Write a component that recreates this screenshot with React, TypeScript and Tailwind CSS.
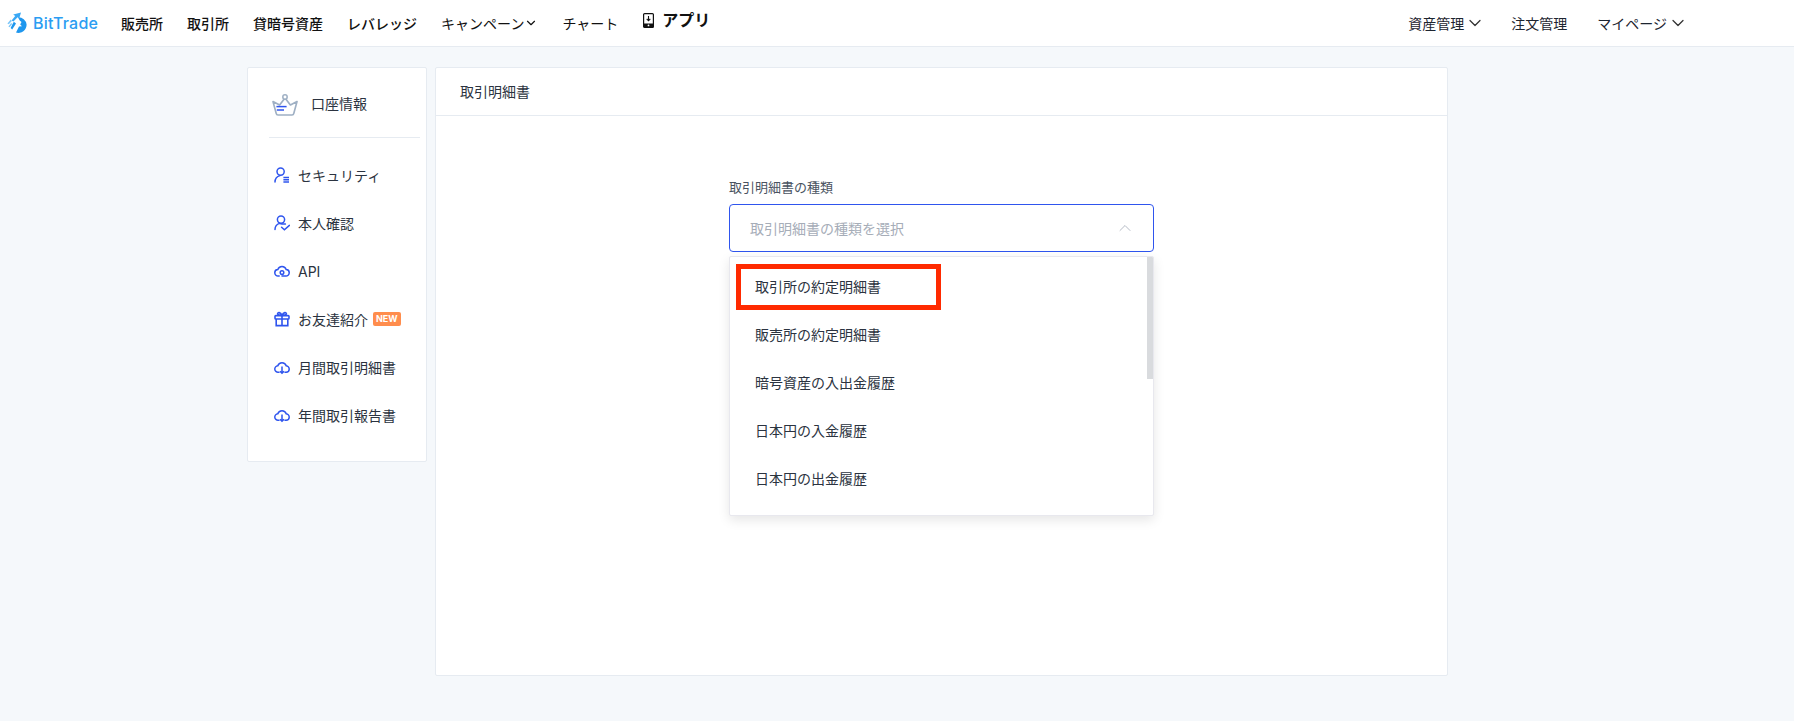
import { ChevronDown, ChevronUp } from "lucide-react";
import type { ReactNode } from "react";

const FONT = "font-['Inter','Noto_Sans_CJK_JP',sans-serif]";

function Logo() {
  return (
    <div className="flex items-center gap-[6px]">
      <svg width="20" height="22" viewBox="0 0 20 22" fill="none">
        <path d="M11 5.2A8.2 8.2 0 0 1 19.6 12.5A8.3 8.3 0 0 1 9 20.6L12 14.6L15 14.2L13.2 12.6L14.5 10L12.7 8.6Z" fill="#1f97ee" />
        <path d="M14 0.6L6.2 2.4L8.2 4L4.6 8.4L6.4 9.6L10.6 5.2L12.2 6.6Z" fill="#3aa8f5" />
        <path d="M6.8 9.8L9 11.6L5.2 17.4L3.6 16Z" fill="#1f97ee" />
        <path d="M3.8 7.6L0.4 11.4L1.8 12.2L4.8 9Z" fill="#7cc6f8" />
        <path d="M4.2 11L1.4 14.4L2.6 15.2L5.2 12Z" fill="#7cc6f8" />
      </svg>
      <span className="text-[16px] font-medium leading-none tracking-[0.2px] text-[#2a9df2]">BitTrade</span>
    </div>
  );
}

function NavLink({ children, strong }: { children: ReactNode; strong?: boolean }) {
  return (
    <a className={`flex items-center text-[14px] text-[#111] ${strong ? "font-medium" : "font-normal"}`}>
      {children}
    </a>
  );
}

function PhoneIcon() {
  return (
    <svg width="11" height="15" viewBox="0 0 11 15" fill="none">
      <rect x="0.6" y="0.6" width="9.8" height="13.8" rx="1" stroke="#111" strokeWidth="1.2" />
      <rect x="0.6" y="10.5" width="9.8" height="3.9" fill="#111" />
      <circle cx="5.5" cy="12.4" r="0.9" fill="#fff" />
      <path d="M5.5 3V7.6M3.7 5.9L5.5 7.8L7.3 5.9" stroke="#111" strokeWidth="1.1" />
    </svg>
  );
}

function Header() {
  return (
    <header className="flex h-[47px] items-center justify-between border-b border-[#e6ebf1] bg-white pl-[7px] pr-[106px]">
      <div className="flex items-center">
        <Logo />
        <nav className="ml-[23px] flex items-center gap-6">
          <NavLink strong>販売所</NavLink>
          <NavLink strong>取引所</NavLink>
          <NavLink strong>貸暗号資産</NavLink>
          <NavLink strong>レバレッジ</NavLink>
          <NavLink>
            キャンペーン
            <ChevronDown size={14} strokeWidth={2} />
          </NavLink>
          <NavLink>チャート</NavLink>
          <a className="-mt-[6px] ml-[1px] flex items-center gap-[8px] text-[16px] font-bold text-[#111]">
            <PhoneIcon />
            アプリ
          </a>
        </nav>
      </div>
      <div className="flex items-center text-[14px] text-[#1d2530]">
        <a className="mr-[26px] flex items-center gap-[1px]">
          資産管理
          <ChevronDown size={20} strokeWidth={1.5} className="text-[#333]" />
        </a>
        <a className="mr-[30px]">注文管理</a>
        <a className="flex items-center gap-[1px]">
          マイページ
          <ChevronDown size={20} strokeWidth={1.5} className="text-[#333]" />
        </a>
      </div>
    </header>
  );
}

const BLUE = "#2f55ee";

function SecurityIcon() {
  return (
    <svg width="16" height="16" viewBox="0 0 16 16" fill="none" stroke={BLUE} strokeWidth="1.5">
      <circle cx="6.6" cy="4.6" r="3.6" />
      <path d="M1 15C1 11.4 3 9.4 6 8.6" strokeLinecap="round" />
      <path d="M9.4 10.6H15M9.4 12.8H15M9.4 15H15" />
    </svg>
  );
}

function VerifyIcon() {
  return (
    <svg width="16" height="16" viewBox="0 0 16 16" fill="none" stroke={BLUE} strokeWidth="1.5">
      <circle cx="7" cy="4.6" r="3.6" />
      <path d="M1 14.6C1 11.4 2.8 9.2 5.6 8.4C8 9 9.6 9.2 11.4 9" strokeLinecap="round" />
      <path d="M7.6 12.2L10.4 14.8L15.4 10.4" strokeLinecap="round" />
    </svg>
  );
}

function CloudPath() {
  return <path d="M5 13.2H4.2A3.2 3.2 0 0 1 3.8 6.8A4.4 4.4 0 0 1 12.2 6.8A3.2 3.2 0 0 1 11.8 13.2H11" strokeLinecap="round" />;
}

function ApiIcon() {
  return (
    <svg width="16" height="16" viewBox="0 0 16 16" fill="none" stroke={BLUE} strokeWidth="1.5">
      <path d="M5.2 13H4.2A3.2 3.2 0 0 1 3.8 6.6A4.4 4.4 0 0 1 12.2 6.6A3.2 3.2 0 0 1 11.8 13H8" strokeLinecap="round" />
      <circle cx="8" cy="9.6" r="1.8" />
    </svg>
  );
}

function GiftIcon() {
  return (
    <svg width="16" height="16" viewBox="0 0 16 16" fill="none" stroke={BLUE} strokeWidth="1.6">
      <rect x="1" y="4.6" width="14" height="3.4" rx="0.8" />
      <path d="M2.2 8V14.6H13.8V8M8 4.6V14.6" />
      <path d="M8 4.4C6.4 1 3.6 1 3.6 2.8C3.6 4.2 6 4.4 8 4.4ZM8 4.4C9.6 1 12.4 1 12.4 2.8C12.4 4.2 10 4.4 8 4.4Z" />
    </svg>
  );
}

function DownloadCloudIcon() {
  return (
    <svg width="16" height="16" viewBox="0 0 16 16" fill="none" stroke={BLUE} strokeWidth="1.5">
      <CloudPath />
      <path d="M8 7.6V14M6 12.2L8 14.2L10 12.2" />
    </svg>
  );
}

const menu = [
  { icon: <SecurityIcon />, label: "セキュリティ" },
  { icon: <VerifyIcon />, label: "本人確認" },
  { icon: <ApiIcon />, label: "API" },
  { icon: <GiftIcon />, label: "お友達紹介", isNew: true },
  { icon: <DownloadCloudIcon />, label: "月間取引明細書" },
  { icon: <DownloadCloudIcon />, label: "年間取引報告書" },
];

function Sidebar() {
  return (
    <aside className="h-[395px] w-[180px] shrink-0 rounded-[2px] border border-[#e6ebf1] bg-white pl-[21px] pr-[6px] pt-[7px]">
      <div className="flex h-[63px] items-center gap-[13px] border-b border-[#e6ebf1] pb-[5px] pl-[3px]">
        <svg width="26" height="22" viewBox="0 0 26 22" fill="none" className="mt-[3px]">
          <path d="M6 21H20C21.2 21 21.6 20.4 21.8 19.4L25 7.6L18.4 11L13 4L7.6 11L1 7.6L4.2 19.4C4.4 20.4 4.8 21 6 21Z" stroke="#9fb0c4" strokeWidth="1.7" strokeLinejoin="round" />
          <circle cx="13" cy="3" r="2.2" stroke="#9fb0c4" strokeWidth="1.5" fill="#fff" />
          <path d="M4.4 12.6H14.6" stroke={BLUE} strokeWidth="1.5" />
          <path d="M4.8 16H12" stroke={BLUE} strokeWidth="1.5" />
        </svg>
        <span className="text-[14px] text-[#2b3340]">口座情報</span>
      </div>
      <ul className="pt-[13px]">
        {menu.map((item) => (
          <li key={item.label} className="flex h-[48px] items-center gap-[8px] pl-[5px] text-[14px] text-[#2b3340]">
            {item.icon}
            <span>{item.label}</span>
            {item.isNew && (
              <span className="-ml-[3px] rounded-[2px] bg-[#ff8d4d] px-[3px] text-[9px] font-bold leading-[14px] text-white">
                NEW
              </span>
            )}
          </li>
        ))}
      </ul>
    </aside>
  );
}

const options = ["取引所の約定明細書", "販売所の約定明細書", "暗号資産の入出金履歴", "日本円の入金履歴", "日本円の出金履歴"];

function StatementSelect() {
  return (
    <div className="relative ml-[293px] w-[425px]">
      <label className="block text-[13px] leading-[20px] text-[#4a5361]">取引明細書の種類</label>
      <div className="mt-[7px] flex h-[48px] items-center justify-between rounded-[4px] border border-[#2f55ee] pl-[20px] pr-[18px] text-[14px] text-[#a6adb8]">
        <span>取引明細書の種類を選択</span>
        <ChevronUp size={20} strokeWidth={1.2} className="text-[#b5bbc6]" />
      </div>
      <div className="absolute left-0 top-[79px] h-[260px] w-full overflow-hidden rounded-[2px] border border-[#e8e8ee] bg-white py-[5px] shadow-[0_4px_12px_rgba(0,0,0,0.1)]">
        {options.map((option) => (
          <div key={option} className="flex h-[48px] items-center pl-[25px] text-[14px] text-[#2b3340]">
            {option}
          </div>
        ))}
        <div className="absolute right-0 top-0 h-[122px] w-[6px] bg-[#d9dbde]" />
      </div>
      <div className="absolute left-[7px] top-[87px] h-[46px] w-[205px] border-[5px] border-[#ff2a00]" />
    </div>
  );
}

export default function App() {
  return (
    <div className={`h-[721px] w-[1794px] overflow-hidden bg-[#f5f8fb] ${FONT}`}>
      <Header />
      <main className="flex gap-[8px] pl-[247px] pt-[20px]">
        <Sidebar />
        <section className="h-[609px] w-[1013px] rounded-[2px] border border-[#e6ebf1] bg-white">
          <div className="flex h-[48px] items-center border-b border-[#e6ebf1] pl-[24px] text-[14px] text-[#2b3340]">
            取引明細書
          </div>
          <div className="pt-[61px]">
            <StatementSelect />
          </div>
        </section>
      </main>
    </div>
  );
}
